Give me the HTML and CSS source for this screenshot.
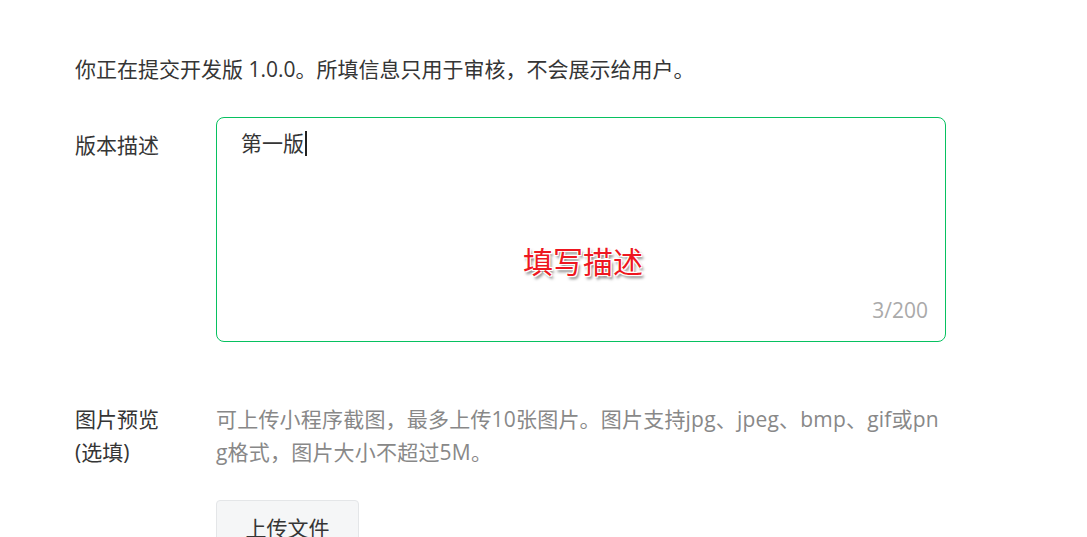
FILE: index.html
```html
<!DOCTYPE html>
<html lang="zh-CN">
<head>
<meta charset="utf-8">
<link rel="stylesheet" href="styles.css">
<title>提交审核</title>
</head>
<body>
<div class="page">
  <p class="intro">你正在提交开发版 1.0.0。所填信息只用于审核，不会展示给用户。</p>
  <div class="row row-desc">
    <div class="label">版本描述</div>
    <div class="field">
      <div class="textarea">
        <div class="value">第一版<span class="caret"></span></div>
        <div class="counter">3/200</div>
        <div class="annot">填写描述</div>
      </div>
    </div>
  </div>
  <div class="row row-pic">
    <div class="label">图片预览<br>(选填)</div>
    <div class="field">
      <p class="tip">可上传小程序截图，最多上传10张图片。图片支持jpg、jpeg、bmp、gif或png格式，图片大小不超过5M。</p>
      <button class="btn">上传文件</button>
    </div>
  </div>
</div>
</body>
</html>
```

FILE: styles.css
```css
html, body {
  margin: 0;
  padding: 0;
  background: #fff;
}
body {
  font-family: "Open Sans", "Noto Sans CJK SC", sans-serif;
  font-size: 21px;
  line-height: 33px;
  color: #353535;
  overflow: hidden;
}
.page {
  padding: 53px 0 0 75px;
}
.intro {
  margin: 0;
}
.row {
  display: flex;
}
.label {
  width: 141px;
  flex: none;
}
.field {
  width: 730px;
}
.row-desc {
  margin-top: 31px;
}
.row-desc .label {
  padding-top: 12px;
}
.textarea {
  position: relative;
  box-sizing: border-box;
  height: 225px;
  border: 1px solid #07c160;
  border-radius: 8px;
  padding: 9px 17px 14px 24px;
  display: flex;
  flex-direction: column;
  justify-content: space-between;
}
.caret {
  display: inline-block;
  width: 2px;
  height: 25px;
  background: #222;
  vertical-align: -5px;
  margin-left: 1px;
}
.counter {
  align-self: flex-end;
  color: #aaaaaa;
  font-size: 21px;
}
.annot {
  position: absolute;
  left: 306px;
  top: 126px;
  font-size: 30px;
  line-height: 36px;
  color: #ee1620;
  text-shadow: 1px 1px 0 #fff, -1px -1px 0 #fff, 1px -1px 0 #fff, -1px 1px 0 #fff, 2px 3px 3px #777;
}
.row-pic {
  margin-top: 61px;
}
.tip {
  margin: 0;
  color: #888;
  word-break: break-all;
  letter-spacing: 0.2px;
}
.btn {
  margin-top: 31px;
  width: 143px;
  height: 54px;
  box-sizing: border-box;
  background: #f5f6f7;
  border: 1px solid #e4e6e8;
  border-radius: 4px;
  font-family: inherit;
  font-size: 21px;
  color: #353535;
  padding: 0;
}
```
